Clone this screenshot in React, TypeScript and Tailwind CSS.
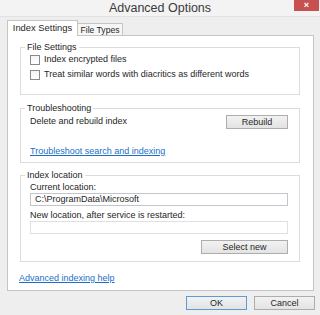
import type { ReactNode } from 'react'

function Group({ title, className, children }: { title: string; className: string; children: ReactNode }) {
    return (
        <div className={`relative w-[280px] border border-[#dcdcdc] pl-[9px] pr-[11px] ${className}`}>
            <span className="absolute -top-[6px] left-[4px] px-[2px] bg-white leading-[11px]">{title}</span>
            {children}
        </div>
    )
}

function Checkbox({ label }: { label: string }) {
    return (
        <div className="flex items-center gap-[4px] h-[15px]">
            <span className="w-[10px] h-[10px] border border-[#8a8a8a] bg-gradient-to-b from-[#f4f4f4] to-white" />
            <span>{label}</span>
        </div>
    )
}

function Button({ label, className, primary }: { label: string; className: string; primary?: boolean }) {
    return (
        <button
            className={`h-[14px] flex items-center justify-center border bg-gradient-to-b from-[#f2f2f2] to-[#e3e3e3] text-[9px] leading-none text-[#262626] ${
                primary ? 'border-[#5b9bd9]' : 'border-[#adadad]'
            } ${className}`}
        >
            {label}
        </button>
    )
}

export default function App() {
    return (
        <div className="w-[320px] h-[315px] bg-[#eeeeee] flex flex-col overflow-hidden font-['Liberation_Sans',Arial,sans-serif] text-[9px] text-[#262626]">
            <div className="relative h-[17px] flex items-center justify-center bg-[#f3f3f3] border-b border-[#e2e2e2]">
                <span className="text-[12.5px] text-[#3a3a3a] leading-none">Advanced Options</span>
                <div className="absolute top-0 right-[1px] w-[25px] h-[11px] bg-[#c75050] flex items-center justify-center text-white text-[9px] font-bold leading-none">
                    ×
                </div>
            </div>

            <div className="flex items-end h-[16px] mt-[3px] ml-[7px]">
                <div className="relative z-10 w-[71px] h-[16px] bg-white border border-b-0 border-[#c5c5c5] flex items-center justify-center text-[9.4px]">
                    Index Settings
                </div>
                <div className="w-[45px] h-[13px] bg-[#f6f6f6] border border-l-0 border-b-0 border-[#c5c5c5] flex items-center justify-center text-[8.6px] font-medium">
                    File Types
                </div>
            </div>

            <div className="-mt-px ml-[7px] w-[307px] h-[256px] bg-white border border-[#c5c5c5] pl-[12px] flex flex-col">
                <Group title="File Settings" className="mt-[11px] h-[48px] pt-[4px]">
                    <Checkbox label="Index encrypted files" />
                    <Checkbox label="Treat similar words with diacritics as different words" />
                </Group>

                <Group title="Troubleshooting" className="mt-[13px] h-[55px] pt-[6px]">
                    <div className="flex items-center justify-between h-[14px]">
                        <span>Delete and rebuild index</span>
                        <Button label="Rebuild" className="w-[62px]" />
                    </div>
                    <div className="mt-[16px] h-[12px] leading-[12px]">
                        <span className="text-[#1a6fc9] underline">Troubleshoot search and indexing</span>
                    </div>
                </Group>

                <Group title="Index location" className="mt-[12px] h-[87px] pt-[5px] flex flex-col">
                    <div className="h-[12px] leading-[12px]">Current location:</div>
                    <div className="h-[13px] border border-[#c3c5cb] pl-[4px] flex items-center leading-none">
                        C:\ProgramData\Microsoft
                    </div>
                    <div className="mt-[3px] h-[12px] leading-[12px]">New location, after service is restarted:</div>
                    <div className="h-[13px] border border-[#dfe0e3]" />
                    <Button label="Select new" className="mt-[6px] self-end w-[87px]" />
                </Group>

                <div className="mt-[10px] -ml-px h-[12px] leading-[12px]">
                    <span className="text-[#1a6fc9] underline">Advanced indexing help</span>
                </div>
            </div>

            <div className="flex justify-end gap-[7px] mt-[5px] pr-[5px]">
                <Button label="OK" className="w-[61px]" primary />
                <Button label="Cancel" className="w-[61px]" />
            </div>
        </div>
    )
}
